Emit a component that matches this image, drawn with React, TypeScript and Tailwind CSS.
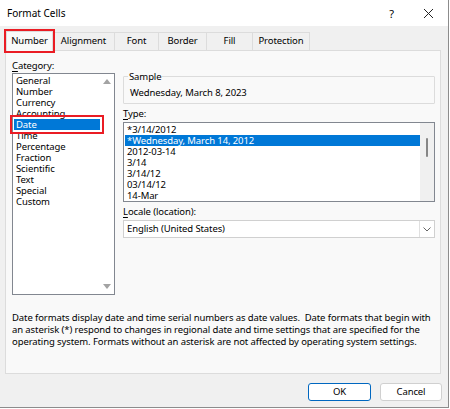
import React from "react";

const catItems = ["General","Number","Currency","Accounting","Date","Time","Percentage","Fraction","Scientific","Text","Special","Custom"];
const typeItems = ["*3/14/2012","*Wednesday, March 14, 2012","2012-03-14","3/14","3/14/12","03/14/12","14-Mar"];

export default function App() {
  return (
    <div className="w-[450px] h-[409px] bg-white text-black text-[9.5px] tracking-[-0.1px]" style={{ fontFamily: '"Noto Sans", "Open Sans", sans-serif' }}>
      <div className="w-[449px] h-[408px] bg-[#f0f0f0] border-r border-b border-[#8c8c8c] flex flex-col">
        {/* Title bar */}
        <div className="h-[26px] bg-white flex items-center pl-[7px] pr-[14px] shrink-0">
          <span className="text-[10px] leading-[14px] tracking-normal">Format Cells</span>
          <div className="ml-auto flex items-center gap-[29px]">
            <span className="text-[11px] leading-none">?</span>
            <svg width="11" height="11" viewBox="0 0 11 11">
              <path d="M1 1 L10 10 M10 1 L1 10" stroke="#222" strokeWidth="1" fill="none" />
            </svg>
          </div>
        </div>
        {/* Tabs */}
        <div className="flex items-end pl-[6px] h-[24px] shrink-0 relative">
          <div className="h-[20px] w-[47px] bg-[#f9f9f9] border border-b-0 border-[#dcdcdc] flex items-center justify-center relative z-10 outline-2 outline-[#ea1c24] -mb-px">
            Number
          </div>
          {[["Alignment", 62], ["Font", 44], ["Border", 48], ["Fill", 46], ["Protection", 57]].map(([t, w]) => (
            <div key={t as string} className="h-[18px] bg-[#f0f0f0] border border-l-0 border-b-0 border-[#dcdcdc] flex items-center justify-center" style={{ width: w as number }}>
              {t}
            </div>
          ))}
        </div>
        {/* Panel */}
        <div className="ml-[5px] w-[436px] h-[324px] bg-[#f9f9f9] border border-[#dcdcdc] shrink-0 flex flex-col">
          <div className="flex pl-[6px] pt-[7px] gap-[8px]">
            {/* left */}
            <div className="w-[103px] flex flex-col">
              <div className="h-[15px] leading-[15px]"><span className="underline underline-offset-2">C</span>ategory:</div>
              <div className="h-[222px] bg-white border border-[#828790] flex">
                <div className="flex-1 pt-[1px] pl-[1px]">
                  {catItems.map((c) => (
                    <div key={c} className={`h-[11px] leading-[11px] pl-[2px] ${c === "Date" ? "bg-[#0078d7] text-white outline-2 outline-offset-[2px] outline-[#ea1c24]" : ""}`}>{c}</div>
                  ))}
                </div>
                <div className="w-[14px] flex flex-col items-center justify-between py-[5px]">
                  <svg width="8" height="5" viewBox="0 0 8 5"><path d="M0 5 L4 0 L8 5 Z" fill="#a3a3a3" /></svg>
                  <svg width="8" height="5" viewBox="0 0 8 5"><path d="M0 0 L4 5 L8 0 Z" fill="#a3a3a3" /></svg>
                </div>
              </div>
            </div>
            {/* right */}
            <div className="w-[312px] flex flex-col pt-[12px]">
              <fieldset className="border border-[#dcdcdc] h-[34px] px-[5px] rounded-[1px]">
                <legend className="px-[1px] -ml-[1px] leading-[13px]">Sample</legend>
                <div className="leading-[14px] pt-[3px] pl-[1px]">Wednesday, March 8, 2023</div>
              </fieldset>
              <div className="h-[14px] leading-[14px] mt-[3px]"><span className="underline underline-offset-2">T</span>ype:</div>
              <div className="h-[80px] bg-white border border-[#828790] flex mt-[1px]">
                <div className="flex-1 pt-[1px] pl-[1px]">
                  {typeItems.map((c, i) => (
                    <div key={c} className={`h-[11px] leading-[11px] pl-[2px] ${i === 1 ? "bg-[#0078d7] text-white" : ""}`}>{c}</div>
                  ))}
                </div>
                <div className="w-[14px] bg-[#f0f0f0] flex justify-center pt-[15px]">
                  <div className="w-[2px] h-[19px] bg-[#868686] rounded-full" />
                </div>
              </div>
              <div className="h-[15px] leading-[15px] mt-[2px]"><span className="underline underline-offset-2">L</span>ocale (location):</div>
              <div className="h-[18px] bg-white border border-[#d0d0d0] flex items-center mt-[1px]">
                <span className="pl-[3px] flex-1">English (United States)</span>
                <div className="w-[15px] h-[16px] border-l border-[#e0e0e0] flex items-center justify-center">
                  <svg width="8" height="5" viewBox="0 0 8 5"><path d="M0.5 0.5 L4 4 L7.5 0.5" stroke="#555" strokeWidth="0.9" fill="none" /></svg>
                </div>
              </div>
            </div>
          </div>
          <div className="pl-[6px] mt-[17px] leading-[12px] whitespace-nowrap">
            <div>Date formats display date and time serial numbers as date values.&nbsp; Date formats that begin with</div>
            <div>an asterisk (*) respond to changes in regional date and time settings that are specified for the</div>
            <div>operating system. Formats without an asterisk are not affected by operating system settings.</div>
          </div>
        </div>
        {/* Buttons */}
        <div className="flex justify-end gap-[9px] pr-[6px] mt-[9px]">
          <div className="w-[63px] h-[18px] bg-white border border-[#0067c0] rounded-[3px] flex items-center justify-center">OK</div>
          <div className="w-[62px] h-[18px] bg-white border border-[#d0d0d0] rounded-[3px] flex items-center justify-center">Cancel</div>
        </div>
      </div>
    </div>
  );
}
